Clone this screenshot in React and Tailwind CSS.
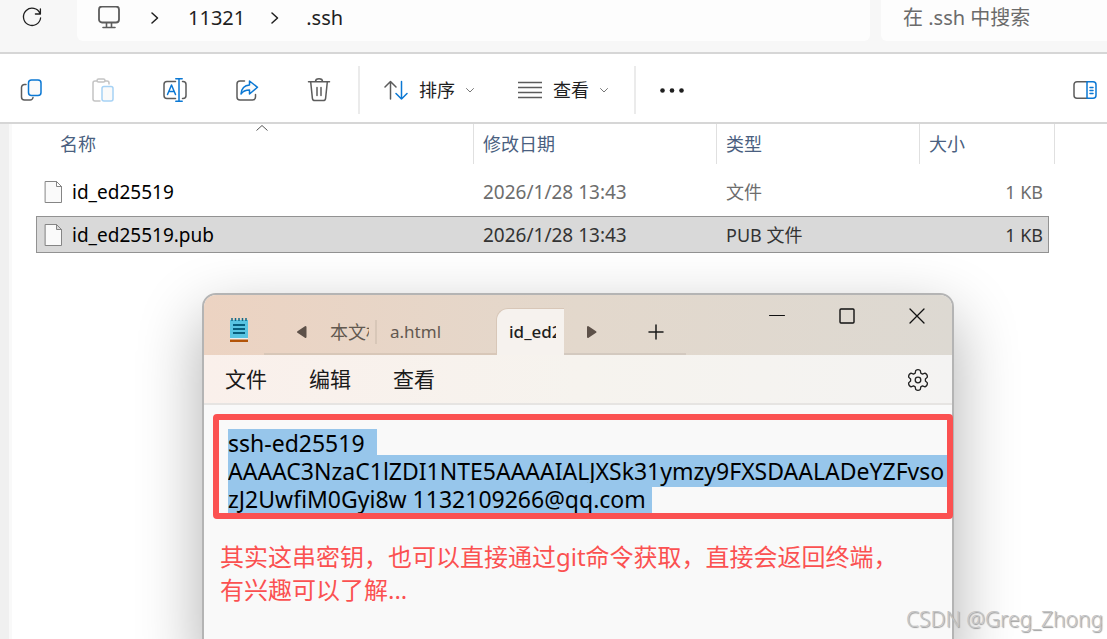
import React, { useEffect, useRef } from 'react';

const files = [
  { name: 'id_ed25519', date: '2026/1/28 13:43', type: '文件', size: '1 KB', selected: false },
  { name: 'id_ed25519.pub', date: '2026/1/28 13:43', type: 'PUB 文件', size: '1 KB', selected: true },
];

const publicKey =
  'ssh-ed25519 AAAAC3NzaC1lZDI1NTE5AAAAIALJXSk31ymzy9FXSDAALADeYZFvsozJ2UwfiM0Gyi8w 1132109266@qq.com ';

const Icon = ({ children, className = 'w-6 h-6', viewBox = '0 0 24 24' }) => (
  <svg
    viewBox={viewBox}
    className={`shrink-0 ${className}`}
    fill="none"
    stroke="#5c5c5c"
    strokeWidth="1.5"
    strokeLinecap="round"
    strokeLinejoin="round"
    aria-hidden="true"
  >
    {children}
  </svg>
);

const Chevron = () => (
  <Icon className="w-2 h-3" viewBox="0 0 8 12">
    <path d="M1 1l5.5 5L1 11" stroke="#1f1f1f" />
  </Icon>
);

const SmallChevron = () => (
  <Icon className="w-2 h-2" viewBox="0 0 8 8">
    <path d="M0.5 2.5L4 6l3.5-3.5" stroke="#777" strokeWidth="1" />
  </Icon>
);

const AddressBar = () => (
  <div className="flex h-[54px] items-start border-b-2 border-[#d6d6d6] bg-[#f7f7f7] text-xl text-[#1f1f1f]">
    <button aria-label="刷新" className="flex h-9 w-[77px] shrink-0 items-center pl-5">
      <Icon className="w-6 h-6">
        <path d="M20 7.5A8.6 8.6 0 1 0 20.6 12M20.4 3v5h-5" stroke="#1f1f1f" strokeWidth="1.3" />
      </Icon>
    </button>
    <nav className="flex h-[41px] flex-1 items-center rounded-b-md bg-[#fdfdfd] pb-1.5 pl-5">
      <Icon>
        <rect x="2" y="0.5" width="20" height="16" rx="3" strokeWidth="1.8" />
        <path d="M9.5 17v4M14.5 17v4M6 21.5h12" strokeWidth="1.6" />
      </Icon>
      <span className="ml-[30px]"><Chevron /></span>
      <a href="#home" className="ml-[29px]">11321</a>
      <span className="ml-[26px]"><Chevron /></span>
      <a href="#ssh" className="ml-[27px]">.ssh</a>
    </nav>
    <input
      type="text"
      aria-label="搜索"
      placeholder="在 .ssh 中搜索"
      className="ml-[11px] h-[41px] w-[226px] rounded-bl-md bg-[#fdfdfd] pb-1.5 pl-[22px] placeholder:text-[#6b6b6b] placeholder:opacity-100"
    />
  </div>
);

const Toolbar = () => (
  <div className="flex h-[70px] items-center border-b-2 border-[#d6d6d6] bg-white pt-[3px] text-lg text-[#1f1f1f]">
    <div className="flex gap-12 pl-[19px]">
      <button aria-label="复制">
        <Icon>
          <path d="M7 6.5H5.5a3 3 0 0 0-3 3V19a3 3 0 0 0 3 3H11a3 3 0 0 0 3-2.5" />
          <rect x="9.5" y="2" width="12.5" height="15.5" rx="3" stroke="#0b78d4" fill="#fafafa" />
        </Icon>
      </button>
      <button aria-label="粘贴" disabled>
        <Icon>
          <path d="M6 3H4a2 2 0 0 0-2 2v16a2 2 0 0 0 2 2h5M14 3h2a2 2 0 0 1 2 2v1" stroke="#c4c4c4" />
          <rect x="6" y="1" width="8" height="3" rx="1.5" stroke="#c4c4c4" />
          <rect x="11" y="8.5" width="11" height="14.5" rx="2" stroke="#a6d2f5" fill="#fafafa" />
        </Icon>
      </button>
      <button aria-label="重命名">
        <Icon>
          <path d="M12.5 3.5H4a3 3 0 0 0-3 3v11a3 3 0 0 0 3 3h8.5M19.5 3.5h.5a3 3 0 0 1 3 3v11a3 3 0 0 1-3 3h-.5" />
          <path d="M4.5 16.5l4-9.5 4 9.5M6 13.5h5M16 .8v22.4M12.8.8h6.4M12.8 23.2h6.4" stroke="#0b78d4" />
        </Icon>
      </button>
      <button aria-label="共享">
        <Icon>
          <path d="M9.5 3H5a3 3 0 0 0-3 3v13a3 3 0 0 0 3 3h12.5a3 3 0 0 0 3-3v-2.5" />
          <path d="M14.5 3v4c-5 .3-8 3.4-8.5 9 2-3 5-4 8.5-4v4l8-6.7z" stroke="#0b78d4" fill="#fafafa" />
        </Icon>
      </button>
      <button aria-label="删除">
        <Icon>
          <path d="M1.5 3.7h21M8.5 3.5a3.5 2.7 0 0 1 7 0M3.7 4l1.7 16.3a2.5 2.5 0 0 0 2.5 2.2h8.2a2.5 2.5 0 0 0 2.5-2.2L20.3 4M10 9.5v8M14 9.5v8" />
        </Icon>
      </button>
    </div>
    <div className="ml-[27px] h-12 w-0.5 bg-[#ebebeb]" />
    <button className="ml-6 flex items-center">
      <Icon>
        <path d="M6.5 21V3.5M1 9l5.5-5.5L12 9" />
        <path d="M17.5 3.5V21M12 15.5l5.5 5.5 5.5-5.5" stroke="#0b78d4" />
      </Icon>
      <span className="ml-[11px] mr-[11px]">排序</span>
      <SmallChevron />
    </button>
    <button className="ml-11 flex items-center">
      <Icon>
        <path d="M0 4.5h24M0 9.5h24M0 14.5h24M0 19.5h24" />
      </Icon>
      <span className="ml-[11px] mr-[11px]">查看</span>
      <SmallChevron />
    </button>
    <div className="ml-[26px] h-12 w-0.5 bg-[#ebebeb]" />
    <button aria-label="更多" className="ml-6">
      <Icon>
        <g fill="#1f1f1f" stroke="none">
          <circle cx="2.5" cy="12.5" r="2.3" />
          <circle cx="12" cy="12.5" r="2.3" />
          <circle cx="21.5" cy="12.5" r="2.3" />
        </g>
      </Icon>
    </button>
    <button aria-label="预览" className="ml-auto mr-2.5">
      <Icon>
        <path d="M14 3.7H4a3 3 0 0 0-3 3v10.6a3 3 0 0 0 3 3h10" />
        <path d="M14 3.7h6a3 3 0 0 1 3 3v10.6a3 3 0 0 1-3 3h-6zM17 9.5h3M17 12.5h3M17 15.5h3" stroke="#0b78d4" />
      </Icon>
    </button>
  </div>
);

const FileTable = () => (
  <table className="-mt-1.5 ml-6 w-[1019px] table-fixed border-separate border-spacing-x-0 border-spacing-y-1.5 text-left text-[19px]">
    <thead>
      <tr className="h-[43px] align-top text-lg text-[#4a5f80]">
        <th className="w-[437px] p-0 font-normal">
          <div className="relative flex h-10 items-center pl-6">
            名称
            <svg viewBox="0 0 12 6" className="absolute left-[220px] top-px h-1.5 w-3" fill="none" stroke="#555" aria-hidden="true">
              <path d="M.5 5.5L6 .5l5.5 5" />
            </svg>
          </div>
        </th>
        <th className="w-[243px] p-0 font-normal">
          <div className="flex h-10 items-center border-l border-[#e0e0e0] pl-[9px]">修改日期</div>
        </th>
        <th className="w-[203px] p-0 font-normal">
          <div className="flex h-10 items-center border-l border-[#e0e0e0] pl-[9px]">类型</div>
        </th>
        <th className="w-[130px] p-0 font-normal">
          <div className="flex h-10 items-center border-l border-[#e0e0e0] pl-[9px]">大小</div>
        </th>
        <td className="p-0">
          <div className="h-10 border-r border-[#e0e0e0]" />
        </td>
      </tr>
    </thead>
    <tbody>
      {files.map((file) => {
        const cell = file.selected
          ? 'border-y border-[#929292] bg-[#d9d9d9] text-[#333]'
          : 'border-y border-transparent text-[#6d6d6d]';
        return (
          <tr key={file.name} className="h-[37px]">
            <td className={`border-l p-0 ${cell}`}>
              <div className="flex items-center pl-[7px] text-black">
                <Icon className="h-6 w-5" viewBox="0 0 20 24">
                  <path d="M1.5 1.5h11l5 5v16h-16zM12.5 1.5v5h5" stroke="#858585" strokeWidth="1" fill="#fafafa" />
                </Icon>
                <span className="ml-2 pt-0.5 leading-[33px]">{file.name}</span>
              </div>
            </td>
            <td className={`pb-0 pl-2.5 pt-0.5 leading-[33px] ${cell}`}>{file.date}</td>
            <td className={`pb-0 pl-2.5 pt-0.5 text-lg leading-[33px] ${cell}`}>{file.type}</td>
            <td className={`border-r pb-0 pr-[5px] pt-0.5 text-right text-lg leading-[33px] ${cell}`}>{file.size}</td>
          </tr>
        );
      })}
    </tbody>
  </table>
);

const TitleBar = () => (
  <div className="flex h-[60px] rounded-t-xl bg-linear-to-r from-[#ecd3c2] via-[#e3d8cc] to-[#ddd9d2] text-[17px] text-[#625950]">
    <div className="flex w-[60px] items-center pl-6 pt-2.5">
      <svg viewBox="0 0 22 26" className="h-[26px] w-[22px]" aria-hidden="true">
        <path d="M2 22h18v3H2z" fill="#b35408" />
        <path d="M2 20h18v2.500H2z" fill="#eee" />
        <path d="M2 3h18v18H2z" fill="#58c4e2" />
        <path d="M4 1v3M7.5 1v3M11 1v3M14.5 1v3M18 1v3" stroke="#126a88" strokeWidth="1.5" />
        <path d="M5 8h12M5 12h12M5 16h12" stroke="#075f7e" strokeWidth="1.8" />
      </svg>
    </div>
    <div className="flex h-full items-center border-b-2 border-[#d8c7b8] pl-8 pt-4">
      <button aria-label="向左滚动">
        <svg viewBox="0 0 12 14" className="h-3.5 w-3" aria-hidden="true">
          <path d="M9.5 2v10L2 7z" fill="#5d5149" stroke="#5d5149" strokeWidth="2" strokeLinejoin="round" />
        </svg>
      </button>
      <button className="ml-[22px] w-[39px] overflow-hidden whitespace-nowrap text-left text-lg">本文档</button>
      <span className="ml-1.5 h-6 w-0.5 bg-[#d8c7b8]" />
      <button className="ml-[13px] w-[106px] text-left">a.html</button>
    </div>
    <button className="mt-[13px] h-[47px] w-[68px] shrink-0 rounded-tl-xl border-l border-t border-[#d8c7b8] bg-[#f6f2ee] pl-3 pr-2 font-medium text-[#1f1f1f]">
      <span className="block overflow-hidden whitespace-nowrap text-left">id_ed25519.pub</span>
    </button>
    <div className="flex h-full w-[122px] shrink-0 items-center border-b-2 border-[#d3c9bf] pl-[21px] pt-4">
      <button aria-label="向右滚动">
        <svg viewBox="0 0 12 14" className="h-3.5 w-3" aria-hidden="true">
          <path d="M3 2v10l7.5-5z" fill="#5d5149" stroke="#5d5149" strokeWidth="2" strokeLinejoin="round" />
        </svg>
      </button>
      <button aria-label="新建标签页" className="ml-[51px]">
        <Icon className="h-4 w-4" viewBox="0 0 16 16">
          <path d="M8 1v14M1 8h14" stroke="#1a1a1a" />
        </Icon>
      </button>
    </div>
    <div className="ml-auto flex h-[42px] items-center gap-[54px] pr-[27px]">
      <button aria-label="最小化">
        <Icon className="h-4 w-4" viewBox="0 0 16 16"><path d="M.5 7.5h15" stroke="#111" strokeWidth="1" /></Icon>
      </button>
      <button aria-label="最大化">
        <Icon className="h-4 w-4" viewBox="0 0 16 16"><rect x="1" y="1" width="14" height="14" rx="1" stroke="#111" strokeWidth="1.4" /></Icon>
      </button>
      <button aria-label="关闭">
        <Icon className="h-4 w-4" viewBox="0 0 16 16"><path d="M1 1l14 14M15 1L1 15" stroke="#111" strokeWidth="1.3" /></Icon>
      </button>
    </div>
  </div>
);

const Notepad = () => {
  const editor = useRef(null);

  useEffect(() => {
    editor.current.focus();
    editor.current.select();
  }, []);

  return (
    <section className="absolute -bottom-4 left-[202px] top-[293px] w-[752px] rounded-t-[14px] border-2 border-[#b4b4b4] bg-[#f9f9f9] shadow-[0_24px_64px_rgba(0,0,0,0.32)]">
      <TitleBar />
      <div className="flex h-[50px] items-center gap-[42px] border-b-2 border-[#e6e4e2] bg-linear-to-r from-[#faf0eb] via-[#f6f3ee] to-[#f4f3f2] pl-[21px] pr-[22px] pt-0.5 text-[21px] text-[#1a1a1a]">
        <button>文件</button>
        <button>编辑</button>
        <button>查看</button>
        <button aria-label="设置" className="ml-auto">
          <Icon>
            <path
              d="M9.7 2.5Q12 .9 14.3 2.5L14.8 5.1L16.5 6.1L19 5.2Q21.5 6.4 21.4 9.1L19.4 11V13L21.4 14.9Q21.5 17.6 19 18.8L16.5 17.9L14.8 18.9L14.3 21.5Q12 23.1 9.7 21.5L9.2 18.9L7.5 17.9L5 18.8Q2.5 17.6 2.6 14.9L4.6 13V11L2.6 9.1Q2.5 6.4 5 5.2L7.5 6.1L9.2 5.1Z"
              stroke="#222"
              strokeWidth="1.3"
            />
            <circle cx="12" cy="12" r="2.8" stroke="#222" strokeWidth="1.3" />
          </Icon>
        </button>
      </div>
      <div className="relative -mr-px ml-[9px] mt-[9px] rounded-sm border-[6px] border-[#fb5151] bg-[#f9f9f9] pl-[9px] pt-[9px]">
        <textarea
          ref={editor}
          aria-label="文本编辑器"
          rows={3}
          spellCheck={false}
          defaultValue={publicKey}
          className="block w-full resize-none overflow-hidden text-[23px] leading-7 text-black outline-none selection:bg-[#97c6eb] selection:text-black"
        />
      </div>
      <p className="ml-4 mt-[21px] text-2xl leading-[33px] text-[#fb5151]">
        其实这串密钥，也可以直接通过git命令获取，直接会返回终端，
        <br />
        有兴趣可以了解...
      </p>
    </section>
  );
};

const App = () => {
  return (
    <main className="relative flex h-screen flex-col overflow-hidden bg-white font-['Noto_Sans','Noto_Sans_CJK_SC',sans-serif]">
      <AddressBar />
      <Toolbar />
      <div className="flex flex-1">
        <div className="w-[9px] shrink-0 bg-[#f0f0f0]" />
        <div className="flex-1 border-l-[3px] border-[#f9f9f9]">
          <FileTable />
        </div>
      </div>
      <Notepad />
      <div className="absolute bottom-1 right-1 text-[21px] font-light leading-8 text-[#c4c4c4] [text-shadow:1px_1px_1px_#999]">
        CSDN @Greg_Zhong
      </div>
    </main>
  );
};

export default App;
